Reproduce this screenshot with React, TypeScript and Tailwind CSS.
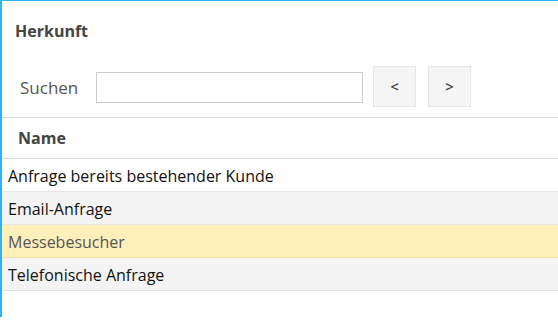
import React from "react";

const rows = [
  { name: "Anfrage bereits bestehender Kunde", bg: "bg-white", text: "text-[#111]", border: "border-[#e6e6e6]" },
  { name: "Email-Anfrage", bg: "bg-[#f4f4f4]", text: "text-[#111]", border: "border-[#e6e6e6]" },
  { name: "Messebesucher", bg: "bg-[#ffefbb]", text: "text-[#555]", border: "border-[#f3e1a6]" },
  { name: "Telefonische Anfrage", bg: "bg-[#f4f4f4]", text: "text-[#111]", border: "border-[#e3e3e3]" },
];

export default function App() {
  return (
    <div
      className="w-[558px] h-[321px] bg-white overflow-hidden"
      style={{ fontFamily: '"Open Sans", "Liberation Sans", sans-serif' }}
    >
      <div className="h-[317px] border-t border-l-2 border-[#2cb5f0] flex flex-col">
        <div className="pl-[13px] pt-[18px] h-[56px] text-[16px] font-bold text-[#444]">Herkunft</div>
        <div className="flex items-center h-[60px] pb-[2px]">
          <span className="ml-[18px] mt-[4px] w-[76px] text-[17px] text-[#555]">Suchen</span>
          <input className="mt-[2px] w-[267px] h-[31px] border border-[#cccccc] bg-white outline-none" />
          <button className="ml-[10px] w-[43px] h-[41px] bg-[#f5f5f5] border border-[#e6e6e6] text-[#444] text-[15px] font-semibold">
            &lt;
          </button>
          <button className="ml-[12px] w-[43px] h-[41px] bg-[#f5f5f5] border border-[#e6e6e6] text-[#444] text-[15px] font-semibold">
            &gt;
          </button>
        </div>
        <div className="h-[42px] border-t border-b border-[#d9d9d9] flex items-center pl-[16px] text-[16px] font-bold text-[#444]">
          Name
        </div>
        {rows.map((r) => (
          <div
            key={r.name}
            className={`h-[33px] flex items-center pl-[6px] pt-[1px] text-[16px] border-b ${r.bg} ${r.text} ${r.border}`}
          >
            {r.name}
          </div>
        ))}
      </div>
    </div>
  );
}
